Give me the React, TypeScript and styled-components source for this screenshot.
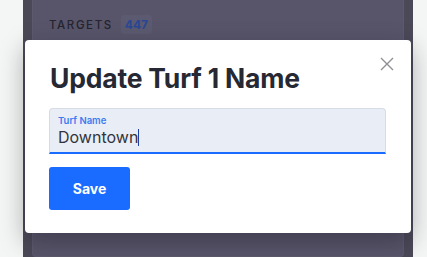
import React from 'react';
import styled, { createGlobalStyle } from 'styled-components';

const GlobalStyle = createGlobalStyle`
  html, body {
    margin: 0;
    padding: 0;
    background: #f4f6f5;
    font-family: Inter, "Noto Sans", Arial, sans-serif;
  }
`;

const Page = styled.div`
  position: relative;
  width: 427px;
  height: 257px;
  overflow: hidden;
  display: flex;
`;

const SideStrip = styled.div<{ $w: number }>`
  width: ${(p) => p.$w}px;
  flex-shrink: 0;
  background: #f4f6f5;
`;

const Backdrop = styled.div`
  flex: 1;
  background: #4b4958;
  padding: 0 9px;
  display: flex;
  flex-direction: column;
`;

const Panel = styled.div`
  flex: 1;
  background: #58556a;
  border: 1px solid #5d5a6d;
  border-top: none;
  border-radius: 0 0 4px 4px;
  padding: 15px 16px;
`;

const TargetsRow = styled.div`
  display: flex;
  align-items: center;
  gap: 8px;
`;

const TargetsLabel = styled.span`
  font-size: 11.5px;
  font-weight: 500;
  letter-spacing: 1.6px;
  color: #25242f;
`;

const Badge = styled.span`
  background: #5b5a70;
  color: #2a4795;
  font-size: 12px;
  font-weight: 700;
  padding: 2px 4px;
  border-radius: 3px;
`;

const Modal = styled.div`
  position: absolute;
  left: 25px;
  top: 40px;
  width: 386px;
  height: 193px;
  box-sizing: border-box;
  background: #ffffff;
  border-radius: 4px;
  padding: 22px 25px 0 24px;
  box-shadow: 0 8px 24px rgba(20, 18, 30, 0.35);
`;

const CloseButton = styled.button`
  position: absolute;
  top: 16px;
  right: 16px;
  width: 16px;
  height: 16px;
  padding: 0;
  border: none;
  background: none;
  display: flex;
  align-items: center;
  justify-content: center;
`;

const Title = styled.h2`
  margin: 0 0 14px 1px;
  font-size: 26.5px;
  line-height: 32px;
  font-weight: 700;
  color: #262833;
  letter-spacing: -0.2px;
`;

const Field = styled.div`
  background: #e9edf6;
  border: 1px solid #d7dbe6;
  border-bottom: 2px solid #1a6bff;
  border-radius: 4px 4px 0 0;
  height: 46px;
  box-sizing: border-box;
  padding: 6px 8px 0 8px;
`;

const FieldLabel = styled.div`
  font-size: 9.5px;
  font-weight: 600;
  color: #3d7bf0;
  line-height: 12px;
`;

const FieldValue = styled.div`
  font-size: 16px;
  line-height: 20px;
  color: #33343b;
  display: flex;
  align-items: center;
`;

const Caret = styled.span`
  display: inline-block;
  width: 1px;
  height: 17px;
  background: #1f3fa8;
`;

const SaveButton = styled.button`
  margin-top: 13px;
  width: 81px;
  height: 43px;
  border: none;
  border-radius: 3px;
  background: #1a6bff;
  color: #ffffff;
  font-family: Inter, Arial, sans-serif;
  font-size: 14px;
  font-weight: 700;
`;

export default function App() {
  return (
    <>
      <GlobalStyle />
      <Page>
        <SideStrip $w={23} />
        <Backdrop>
          <Panel>
            <TargetsRow>
              <TargetsLabel>TARGETS</TargetsLabel>
              <Badge>447</Badge>
            </TargetsRow>
          </Panel>
        </Backdrop>
        <SideStrip $w={14} />
        <Modal>
          <CloseButton aria-label="Close">
            <svg width="14" height="14" viewBox="0 0 14 14">
              <path d="M1 1 L13 13 M13 1 L1 13" stroke="#8f8f94" strokeWidth="1.4" fill="none" />
            </svg>
          </CloseButton>
          <Title>Update Turf 1 Name</Title>
          <Field>
            <FieldLabel>Turf Name</FieldLabel>
            <FieldValue>
              Downtown
              <Caret />
            </FieldValue>
          </Field>
          <SaveButton>Save</SaveButton>
        </Modal>
      </Page>
    </>
  );
}
